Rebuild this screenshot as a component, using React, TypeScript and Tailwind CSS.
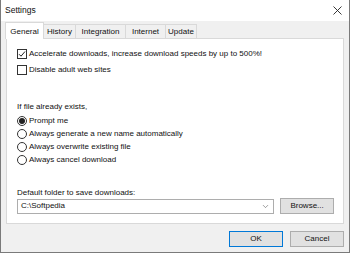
import { ChevronDown } from "lucide-react";

function Check({ checked, label }: { checked?: boolean; label: string }) {
    return (
        <div className="flex items-center h-[14px] gap-[2px]">
            <div className="w-[10px] h-[10px] border border-[#333] bg-white flex items-center justify-center">
                {checked && (
                    <svg width="8" height="8" viewBox="0 0 8 8">
                        <path d="M1 4.2 L3 6.2 L7 1.5" stroke="#222" strokeWidth="1" fill="none" />
                    </svg>
                )}
            </div>
            <span>{label}</span>
        </div>
    );
}

function Radio({ checked, label }: { checked?: boolean; label: string }) {
    return (
        <div className="flex items-center h-[13px] gap-[2px]">
            <div className="w-[10px] h-[10px] rounded-full border border-[#333] bg-white flex items-center justify-center">
                {checked && <div className="w-[6px] h-[6px] rounded-full bg-[#222]" />}
            </div>
            <span>{label}</span>
        </div>
    );
}

const tabs = [
    { name: "General", w: "w-[39px]" },
    { name: "History", w: "w-[33px]" },
    { name: "Integration", w: "w-[51px]" },
    { name: "Internet", w: "w-[41px]" },
    { name: "Update", w: "w-[32px]" },
];

export default function App() {
    return (
        <div
            className="w-[350px] h-[253px] bg-[#f0f0f0] border-x border-b border-[#7a7a7a] flex flex-col text-[8px] text-[#111] overflow-hidden"
            style={{ fontFamily: '"Liberation Sans", Arial, sans-serif' }}
        >
            <div className="h-[21px] shrink-0 bg-white flex items-center justify-between pl-[4px] pr-[7px]">
                <span className="text-[8.5px]">Settings</span>
                <svg width="9" height="9" viewBox="0 0 9 9">
                    <path d="M0.5 0.5 L8.5 8.5 M8.5 0.5 L0.5 8.5" stroke="#222" strokeWidth="0.9" />
                </svg>
            </div>

            <div className="px-[5px] pt-[1px] shrink-0">
                <div className="flex items-end h-[17px] -ml-px relative z-10">
                    {tabs.map((t, i) => (
                        <div
                            key={t.name}
                            className={
                                i === 0
                                    ? `${t.w} h-[17px] bg-white border-x border-t border-[#d9d9d9] flex items-center justify-center pt-[1px]`
                                    : `${t.w} h-[15px] -ml-px bg-[#f0f0f0] border border-[#d9d9d9] flex items-center justify-center`
                            }
                        >
                            {t.name}
                        </div>
                    ))}
                </div>
                <div className="h-[186px] -mt-px bg-white border border-[#d9d9d9] flex flex-col pl-[10px] pr-[9px]">
                    <div className="mt-[8px]">
                        <Check checked label="Accelerate downloads, increase download speeds by up to 500%!" />
                    </div>
                    <div className="mt-[2px]">
                        <Check label="Disable adult web sites" />
                    </div>
                    <div className="mt-[23px] h-[14px] flex items-center">If file already exists,</div>
                    <Radio checked label="Prompt me" />
                    <Radio label="Always generate a new name automatically" />
                    <Radio label="Always overwrite existing file" />
                    <Radio label="Always cancel download" />
                    <div className="mt-[21px] h-[11px] flex items-center">Default folder to save downloads:</div>
                    <div className="flex items-center gap-[6px]">
                        <div className="w-[258px] h-[15px] border border-[#adadad] bg-white flex items-center justify-between pl-[3px] pr-[3px]">
                            <span>C:\Softpedia</span>
                            <ChevronDown className="w-[9px] h-[9px] text-[#555]" strokeWidth={1.5} />
                        </div>
                        <div className="w-[54px] h-[16px] border border-[#adadad] bg-[#e1e1e1] flex items-center justify-center">
                            Browse...
                        </div>
                    </div>
                </div>
            </div>

            <div className="flex justify-end gap-[7px] px-[5px] pt-[7px]">
                <div className="w-[54px] h-[16px] border border-[#0078d7] bg-[#e1e1e1] flex items-center justify-center">
                    OK
                </div>
                <div className="w-[54px] h-[16px] border border-[#adadad] bg-[#e1e1e1] flex items-center justify-center">
                    Cancel
                </div>
            </div>
        </div>
    );
}
